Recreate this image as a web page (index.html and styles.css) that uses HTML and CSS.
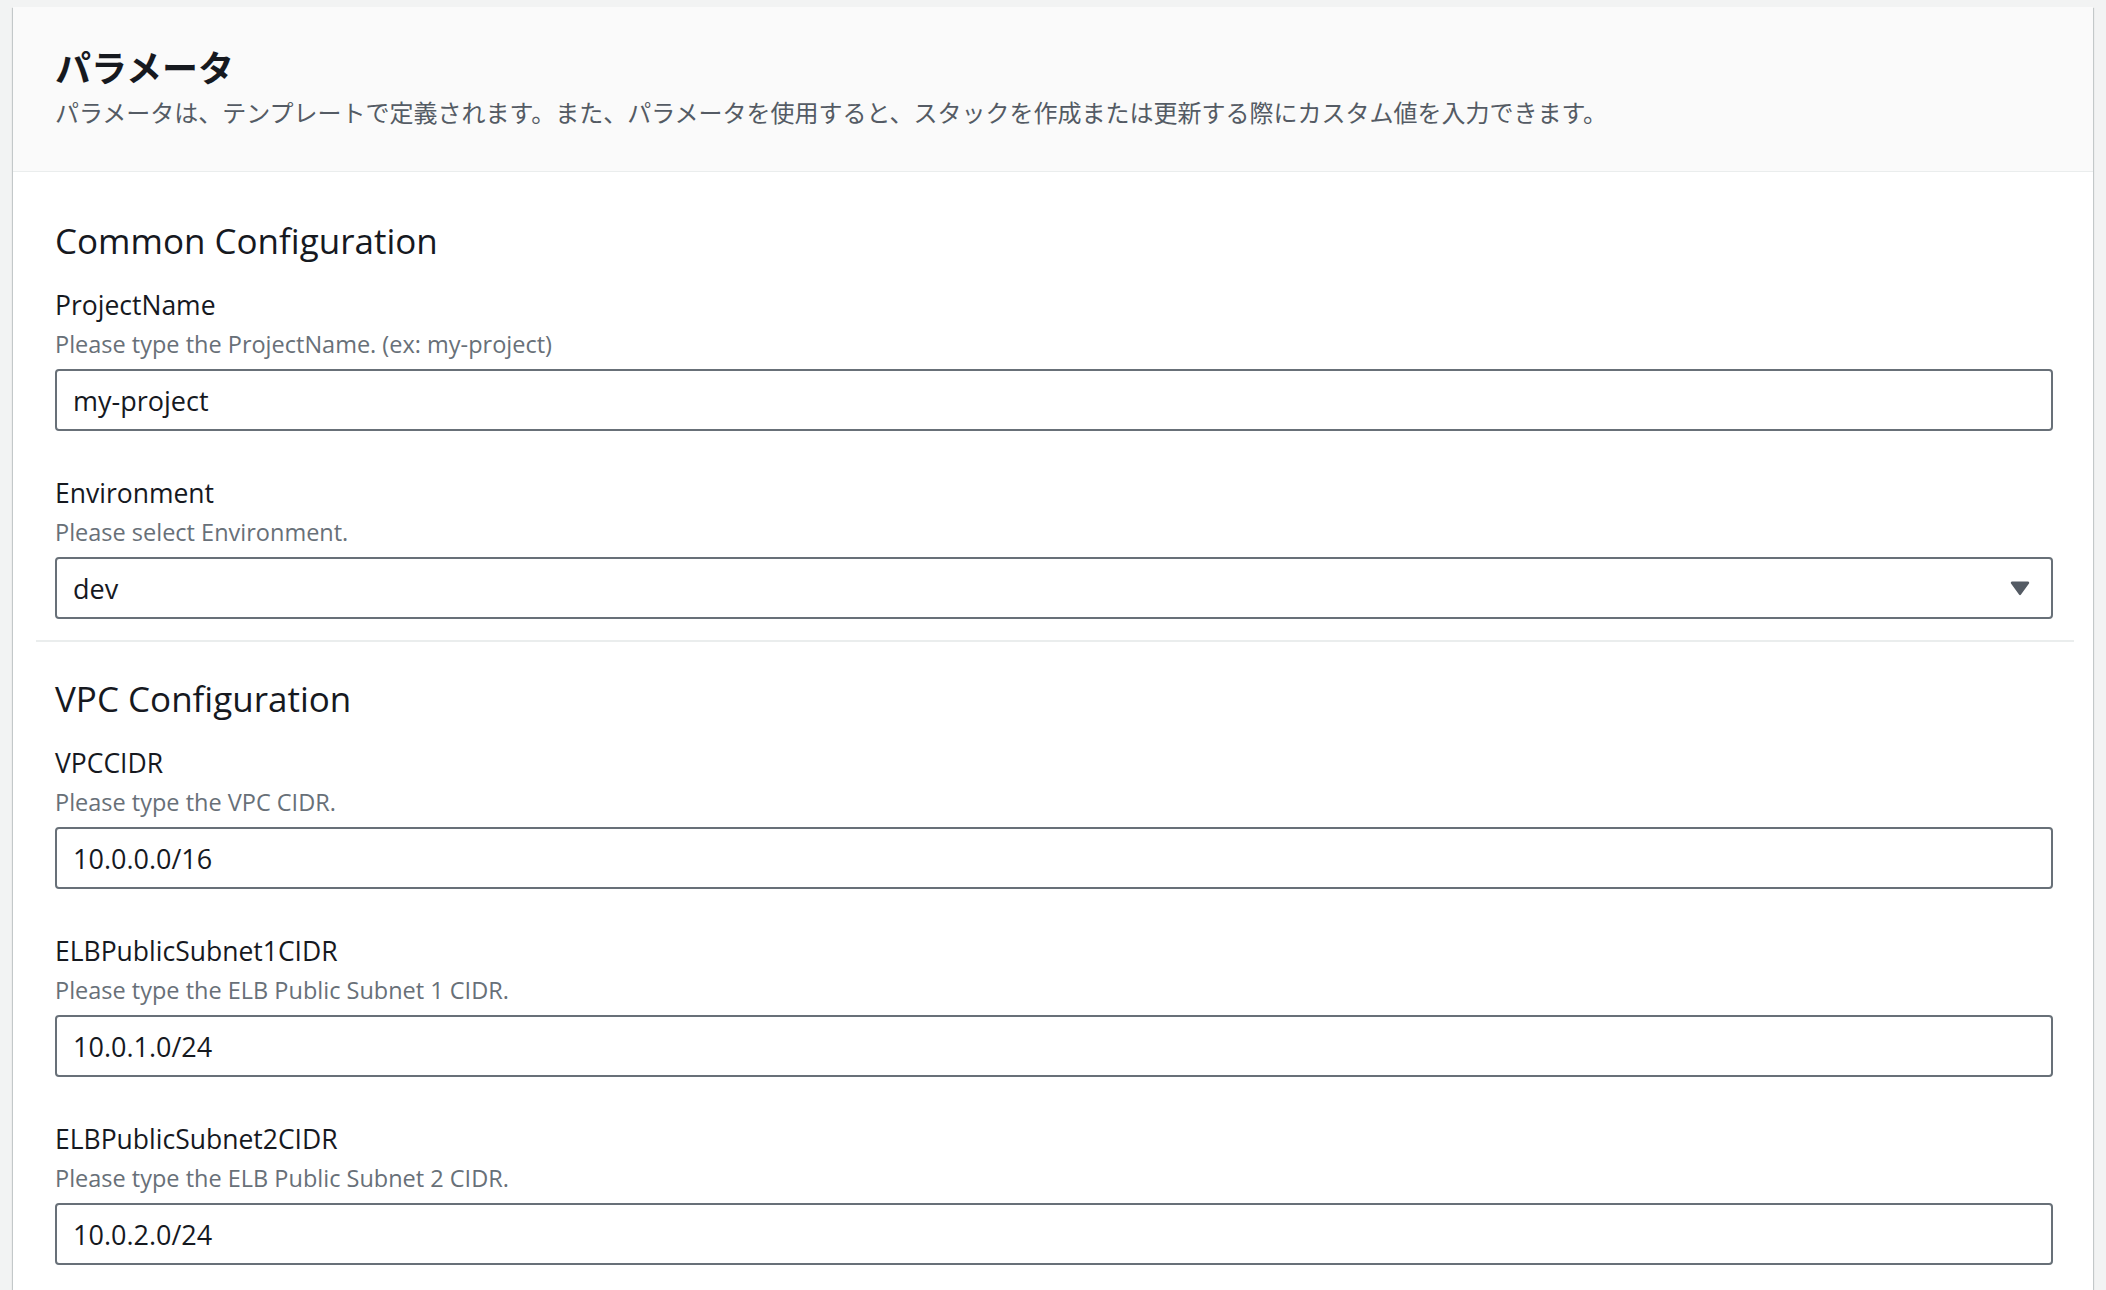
FILE: index.html
```html
<!DOCTYPE html>
<html lang="ja">
<head>
    <meta charset="UTF-8">
    <meta name="viewport" content="width=device-width, initial-scale=1.0">
    <title>パラメータ</title>
    <link rel="stylesheet" href="styles.css">
</head>
<body>

    <div class="container">
        <!-- Header -->
        <div class="container-header">
            <h2>パラメータ</h2>
            <p class="header-desc">パラメータは、テンプレートで定義されます。また、パラメータを使用すると、スタックを作成または更新する際にカスタム値を入力できます。</p>
        </div>

        <!-- Common Configuration -->
        <div class="section section-first">
            <h3>Common Configuration</h3>
            <div class="field">
                <label for="ProjectName">ProjectName</label>
                <div class="field-desc">Please type the ProjectName. (ex: my-project)</div>
                <input type="text" id="ProjectName" value="my-project">
            </div>
            <div class="field">
                <label for="Environment">Environment</label>
                <div class="field-desc">Please select Environment.</div>
                <div class="select-box" id="Environment">
                    <span>dev</span>
                    <svg class="caret" width="20" height="16" viewBox="0 0 20 16">
                        <path d="M2 1.5h16a1.2 1.2 0 0 1 1 1.9l-8 11a1.2 1.2 0 0 1-2 0l-8-11a1.2 1.2 0 0 1 1-1.9z"/>
                    </svg>
                </div>
            </div>
        </div>

        <hr class="divider">

        <!-- VPC Configuration -->
        <div class="section">
            <h3>VPC Configuration</h3>
            <div class="field">
                <label for="VPCCIDR">VPCCIDR</label>
                <div class="field-desc">Please type the VPC CIDR.</div>
                <input type="text" id="VPCCIDR" value="10.0.0.0/16">
            </div>
            <div class="field">
                <label for="ELBPublicSubnet1CIDR">ELBPublicSubnet1CIDR</label>
                <div class="field-desc">Please type the ELB Public Subnet 1 CIDR.</div>
                <input type="text" id="ELBPublicSubnet1CIDR" value="10.0.1.0/24">
            </div>
            <div class="field">
                <label for="ELBPublicSubnet2CIDR">ELBPublicSubnet2CIDR</label>
                <div class="field-desc">Please type the ELB Public Subnet 2 CIDR.</div>
                <input type="text" id="ELBPublicSubnet2CIDR" value="10.0.2.0/24">
            </div>
        </div>
    </div>

</body>
</html>
```

FILE: styles.css
```css
body {
    font-family: "Open Sans", "Noto Sans CJK JP", sans-serif;
    background-color: #f2f3f3;
    color: #16191f;
    margin: 0;
    padding: 7px 13px 0;
}
.container {
    background-color: white;
    box-shadow: 0 1px 1px 0 rgba(0, 28, 36, 0.3), 1px 1px 1px 0 rgba(0, 28, 36, 0.15), -1px 1px 1px 0 rgba(0, 28, 36, 0.15);
    min-height: 1300px;
}
.container-header {
    background-color: #fafafa;
    border-bottom: 1px solid #eaeded;
    padding: 37px 40px 43px 42px;
    font-family: "Noto Sans CJK JP", sans-serif;
}
.container-header h2 {
    margin: 0;
    font-size: 36px;
    line-height: 44px;
    font-weight: 700;
}
.header-desc {
    margin: 8px 0 0;
    font-size: 24px;
    line-height: 32px;
    color: #545b64;
}
.section {
    padding: 35px 40px 21px 42px;
}
.section-first {
    padding-top: 47px;
}
.section h3 {
    margin: 0 0 24px;
    font-size: 35px;
    line-height: 44px;
    font-weight: 400;
}
.field {
    margin-bottom: 44px;
}
.field:last-child {
    margin-bottom: 0;
}
.field label {
    display: block;
    font-size: 26.5px;
    line-height: 36px;
    margin-bottom: 5px;
}
.field-desc {
    font-size: 23.5px;
    line-height: 32px;
    color: #687078;
    margin-bottom: 9px;
}
.field input, .select-box {
    box-sizing: border-box;
    width: 100%;
    height: 62px;
    padding: 0 21px 0 16px;
    border: 2px solid #687078;
    border-radius: 4px;
    font-family: "Open Sans", sans-serif;
    font-size: 27px;
    color: #16191f;
    background-color: white;
    outline: none;
}
.select-box {
    display: flex;
    justify-content: space-between;
    align-items: center;
}
.caret {
    fill: #545b64;
}
.divider {
    border: none;
    height: 2px;
    background-color: #eaeded;
    margin: 0 19px 0 23px;
}
```
